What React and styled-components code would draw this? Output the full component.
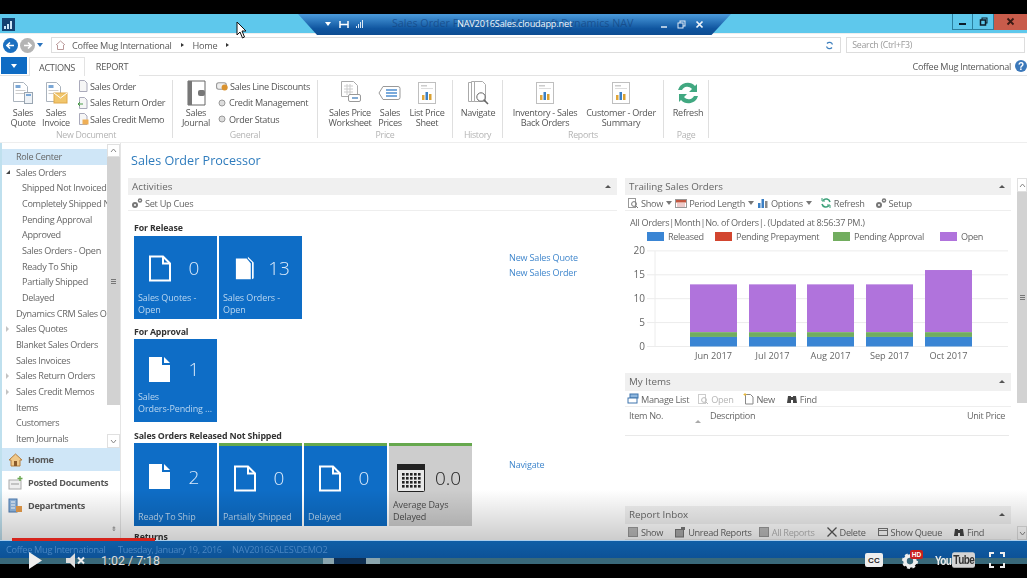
import React from "react";
import styled, { createGlobalStyle } from "styled-components";

const Global = createGlobalStyle`
  html, body { margin: 0; padding: 0; background: #000; overflow: hidden; }
  * { box-sizing: border-box; }
`;

const Stage = styled.div`
  position: relative; width: 1027px; height: 578px; background: #000; overflow: hidden;
  font-family: "Open Sans", "Noto Sans", sans-serif; font-size: 9.2px; color: #555; letter-spacing: -.3px;
  display: flex; flex-direction: column;
`;
const BlackBar = styled.div`height: ${p => p.$h}px; flex: none; background: #000;`;
const Win = styled.div`height: 550px; flex: none; display: flex; flex-direction: column; background: #fff; filter: blur(0.4px);`;

const TitleBar = styled.div`height: 19px; flex: none; background: #5ec8ec; display: flex; justify-content: space-between; align-items: flex-start; padding-left: 2px;`;
const AppLogo = styled.svg`width: 13px; height: 13px; margin-top: 4px;`;
const WinButtons = styled.div`display: flex; height: 16px;`;
const WinBtn = styled.div`
  width: ${p => p.$w}px; display: flex; align-items: center; justify-content: center;
  background: ${p => p.$close ? "#c85c4b" : "#5ec8ec"}; border: 1px solid ${p => p.$close ? "#c85c4b" : "#2b7f9f"}; border-top: 0; border-left-width: ${p => p.$nl ? 0 : 1}px;
`;
const WinGlyph = styled.svg`width: 9px; height: 9px;`;

const AddressRow = styled.div`height: 24px; flex: none; display: flex; align-items: center; padding: 0 2px 1px 3px; border-top: 1px solid #eee;`;
const NavCircle = styled.div`
  width: 15px; height: 15px; border-radius: 50%; background: ${p => p.$bg}; margin-right: 2px; color: #fff;
  display: flex; align-items: center; justify-content: center;
`;
const TinyCaret = styled.span`
  width: 0; height: 0; border-left: 3px solid transparent; border-right: 3px solid transparent; border-top: 4px solid ${p => p.$c || "#2a73bd"};
  margin: ${p => p.$m || "0"};
  display: inline-block; flex: none;
`;
const AddressBox = styled.div`
  width: 792px; height: 16px; margin-left: 8px; border: 1px solid #ddd; display: flex; align-items: center; padding: 0 6px 0 3px;
  font-size: 9.2px; color: #5a5a5a; gap: 3px;
`;
const Crumb = styled.span`margin-left: ${p => p.$ml || 0}px;`;
const CrumbArrow = styled.span`width: 0; height: 0; border-top: 2.5px solid transparent; border-bottom: 2.5px solid transparent; border-left: 3px solid #333; margin: 0 6px;`;
const Push = styled.span`flex: 1;`;
const SearchBox = styled.div`width: 179px; height: 16px; margin-left: 5px; border: 1px solid #ddd; padding-left: 5px; display: flex; align-items: center; color: #9a9a9a; font-size: 8.8px;`;

const TabRow = styled.div`height: 19px; flex: none; display: flex; align-items: stretch; padding-left: 1px; border-bottom: 1px solid #e3e3e3;`;
const FileTab = styled.div`width: 26px; height: 17px; background: #0f6cc4; display: flex; align-items: center; justify-content: center;`;
const Tab = styled.div`
  width: ${p => p.$w}px; margin-left: ${p => p.$ml || 0}px; height: 19px; display: flex; align-items: center; justify-content: center; font-size: 9.2px; color: #555;
  background: #fff; ${p => p.$active ? "border: 1px solid #e3e3e3; border-bottom: 0;" : ""}
`;
const CompanyArea = styled.div`margin-left: auto; display: flex; align-items: center; font-size: 9.1px; color: #555; gap: 4px;`;
const HelpDot = styled.div`width: 12px; height: 12px; border-radius: 50%; background: #3b78ba; color: #fff; font: bold 10px "Liberation Sans", sans-serif; display: flex; align-items: center; justify-content: center;`;

const Ribbon = styled.div`height: 67px; flex: none; display: flex; padding-top: 4px; border-bottom: 1px solid #eee;`;
const Group = styled.div`
  width: ${p => p.$w}px; height: 58px; flex: none; display: flex; flex-direction: column; border-right: 1px solid #dfdfdf; padding-left: ${p => p.$pl || 0}px;
`;
const GroupItems = styled.div`display: flex; flex: 1; min-height: 0;`;
const GroupLabel = styled.div`height: 11px; line-height: 11px; margin-bottom: -3px; text-align: center; margin-left: ${p => -(p.$pl || 0)}px; font-size: 8.8px; color: #b4b4b4;`;
const BigBtn = styled.div`
  width: ${p => p.$w}px; margin-left: ${p => p.$ml || 0}px; flex: none; display: flex; flex-direction: column; align-items: center; text-align: center;
  font-size: 9.1px; line-height: 10px; color: #555;
`;
const BigIcon = styled.svg`width: 26px; height: 26px; margin-bottom: 2px; flex: none;`;
const SmallList = styled.div`margin-left: ${p => p.$ml || 0}px; margin-top: -2px; display: flex; flex-direction: column; gap: .5px;`;
const SmallItem = styled.div`height: 16px; display: flex; align-items: center; gap: 1px; font-size: 9.1px; white-space: nowrap; color: #555;`;
const SmallIcon = styled.svg`width: ${p => p.$s || 12}px; height: ${p => p.$s || 12}px; flex: none;`;

const Body = styled.div`flex: 1; min-height: 0; display: flex; position: relative; overflow: hidden;`;
const Side = styled.div`width: 121px; flex: none; display: flex; flex-direction: column; border-right: 1px solid #e5e5e5; border-left: 2px solid #bfe0ee;`;
const SideTop = styled.div`height: 305px; flex: none; display: flex;`;
const SideTree = styled.div`flex: 1; min-width: 0; padding-top: 6px; overflow: hidden;`;
const TreeRow = styled.div`
  height: 15.67px; line-height: 15.67px; white-space: nowrap; overflow: hidden; font-size: 9.1px; color: #666;
  padding-left: ${p => p.$lvl ? 20 : 14}px; position: relative;
  background: ${p => p.$active ? "#cfe6f7" : "transparent"};
`;
const Twisty = styled.span`
  position: absolute; left: 4px; top: 5px; width: 0; height: 0;
  ${p => p.$open
    ? "border-left: 4px solid transparent; border-bottom: 4px solid #444;"
    : "border-top: 3px solid transparent; border-bottom: 3px solid transparent; border-left: 3px solid #c3c3c3;"}
`;
const VScroll = styled.div`width: ${p => p.$w}px; flex: none; display: flex; flex-direction: column; background: #fff; margin-top: ${p => p.$mt || 0}px; margin-left: ${p => p.$ml || 0}px;`;
const ScrollBtn = styled.div`height: ${p => p.$h}px; flex: none; border: 1px solid #e0e0e0; display: flex; align-items: center; justify-content: center; background: #fff;`;
const Thumb = styled.div`height: ${p => p.$h}px; flex: none; background: #d2d2d2; display: flex; align-items: center; justify-content: center;`;
const TrackRest = styled.div`flex: 1;`;
const Grip = styled.div`width: 5px; height: 5px; border-top: 1px solid #777; border-bottom: 1px solid #777; position: relative;
  &::after { content: ""; position: absolute; left: 0; right: 0; top: 1px; height: 1px; background: #777; }
`;
const Chev = styled.svg`width: 7px; height: 5px;`;

const NavBtn = styled.div`
  height: ${p => p.$h}px; display: flex; align-items: center; gap: 5px; padding-left: 6px; font-size: 9.1px; font-weight: 700; color: #585858;
  background: ${p => p.$active ? "#cfe6f7" : "#fff"};
`;
const NavSpacer = styled.div`flex: 1; display: flex; justify-content: flex-end; align-items: center; padding: 0 3px 0 0; font-size: 7px; color: #999;`;

const Content = styled.div`flex: 1; min-width: 0; display: flex; padding-left: 7px;`;
const LeftCol = styled.div`width: 489px; flex: none; display: flex; flex-direction: column;`;
const RightCol = styled.div`width: 386px; flex: none; margin-left: 8px; padding-top: 35px; display: flex; flex-direction: column;`;
const PageTitle = styled.div`height: 20px; margin: 8px 0 7px 3px; font-size: 12.6px; line-height: 20px; letter-spacing: 0; color: #2f7cbd;`;
const PartHeader = styled.div`
  height: ${p => p.$h || 17}px; flex: none; background: #f0f0f0; display: flex; justify-content: space-between; align-items: center; padding: 0 6px 1px 4px; font-size: 9.8px; letter-spacing: 0; color: #666;
`;
const UpMark = styled.span`width: 0; height: 0; border-left: 3px solid transparent; border-right: 3px solid transparent; border-bottom: 3px solid #555;`;
const PartBar = styled.div`height: 16px; flex: none; display: flex; align-items: center; padding: 1px 0 0 ${p => p.$pl || 3}px; border-bottom: 1px solid #eee; font-size: 9.2px; color: #666; gap: ${p => p.$gap || 9}px;`;
const BarItem = styled.span`display: flex; align-items: center; gap: 2px; color: ${p => p.$off ? "#b5b5b5" : "#666"}; white-space: nowrap; margin-left: ${p => p.$ml || 0}px;`;
const Cues = styled.div`padding-left: 6px; padding-top: 11px;`;
const CueTitle = styled.div`height: 12px; line-height: 12px; margin: ${p => p.$mt || 0}px 0 ${p => p.$mb || 1}px; font-size: 8.8px; font-weight: 700; letter-spacing: -.15px; color: #333;`;
const CueRow = styled.div`display: flex;`;
const Tiles = styled.div`width: 375px; flex: none; display: flex; gap: 2px;`;
const Links = styled.div`padding-top: 14px; display: flex; flex-direction: column;`;
const LinkText = styled.div`height: 15px; line-height: 15px; color: #3f86cc; font-size: 9px; letter-spacing: -.15px;`;
const Tile = styled.div`
  width: 83px; height: 83px; flex: none; display: flex; flex-direction: column; padding: 0 5px ${p => p.$lb || 3}px 4px;
  background: ${p => p.$gray ? "#cdcdcd" : "#0e6dc6"};
  color: ${p => p.$gray ? "#4c4c4c" : "#b9d6f0"};
  border-top: ${p => p.$bar ? "3px solid #66a84e" : "0"};
  letter-spacing: -.1px;
`;
const TileTop = styled.div`display: flex; align-items: center; padding-top: ${p => p.$pt}px; padding-left: ${p => p.$il || 10}px; height: 52px; flex: none;`;
const TileIcon = styled.svg`width: ${p => p.$s || 24}px; height: ${p => p.$s || 27}px; flex: none;`;
const TileCount = styled.div`flex: 1; text-align: center; padding-left: 4px; font-size: 19px; font-weight: 300; letter-spacing: 0; color: ${p => p.$gray ? "#222" : "#dbeafa"};`;
const TileLabel = styled.div`margin-top: auto; font-size: 9px; line-height: 12px; white-space: ${p => p.$nowrap ? "nowrap" : "normal"};`;

const Status = styled.div`font-size: 9.1px; color: #666; height: 15px; line-height: 15px; padding-left: 5px; margin-top: 4px;`;
const Legend = styled.div`height: 15px; display: flex; align-items: center; padding-left: 22px; font-size: 9.1px; color: #666;`;
const Swatch = styled.span`width: 17px; height: 9px; background: ${p => p.$c}; flex: none; margin-right: 4px;`;
const LegendLabel = styled.span`width: ${p => p.$w}px; flex: none; white-space: nowrap;`;
const Chart = styled.svg`width: 386px; height: 122px; flex: none; display: block; letter-spacing: 0; margin-top: 1px; margin-bottom: 7px;`;
const ColRow = styled.div`height: 29px; flex: none; display: flex; padding: 2px 4px 0 4px; border-bottom: 1px solid #e9e9e9; font-size: 9.1px; color: #666; margin-right: 2px;`;
const ColNo = styled.div`width: 81px; position: relative;`;
const SortMark = styled.span`position: absolute; left: 66px; top: 11px; width: 0; height: 0; border-left: 3px solid transparent; border-right: 3px solid transparent; border-bottom: 3px solid #aaa;`;
const ColDesc = styled.div`flex: 1;`;
const EmptyList = styled.div`height: 70px; flex: none;`;

const Shade = styled.div`position: absolute; left: 0; right: 0; top: 347px; height: 50px; background: linear-gradient(rgba(0,0,0,0), rgba(0,0,0,.2)); pointer-events: none;`;

const StatusBar = styled.div`height: 18px; flex: none; background: linear-gradient(#0f5ea6, #0d5297); border-top: 1px solid #a9cdec; display: flex; align-items: center; padding-left: 6px; color: #4a86c3; font-size: 9.2px;`;
const StatusCell = styled.span`width: ${p => p.$w}px; flex: none; white-space: nowrap;`;
const Task = styled.div`height: 6px; flex: none; background: #39697a; display: flex; padding-left: 323px;`;
const TaskItem = styled.div`width: ${p => p.$w}px; height: 6px; background: ${p => p.$c}; flex: none;`;

const Remote = styled.div`
  position: absolute; left: 298px; top: 14px; width: 433px; height: 21px;
  background: linear-gradient(#4b9bdc, #0f559f 70%, #0e4d92);
  clip-path: polygon(0 0, 100% 0, 95.5% 100%, 4.4% 100%);
  display: flex; align-items: center; padding-left: 27px; padding-bottom: 1px; color: #fff;
`;
const RemotePin = styled.svg`width: 22px; height: 9px; margin-left: 2px; flex: none;`;
const RemoteTitle = styled.div`position: relative; flex: 1; height: 20px;`;
const GhostTitle = styled.span`position: absolute; left: 27px; top: 2px; white-space: nowrap; font-size: 10.7px; letter-spacing: 0; color: rgba(20,70,130,.75);`;
const HostTitle = styled.span`position: absolute; left: 92px; top: 3px; white-space: nowrap; font-size: 9.2px; letter-spacing: -.2px; color: #f0f6fb;`;
const RemoteBtns = styled.div`display: flex; padding-right: 23px; align-items: center;`;
const RemoteBtn = styled.svg`width: 17.5px; height: 9px; flex: none;`;
const Cursor = styled.svg`position: absolute; left: 236px; top: 21px; width: 12px; height: 18px;`;

const Progress = styled.div`position: absolute; left: 12px; top: 538px; width: 143px; height: 3px; background: #d5241c;`;
const Player = styled.div`position: absolute; left: 0; right: 0; top: 548px; height: 24px; display: flex; align-items: center; color: #e8e8e8; padding-left: 28px; letter-spacing: 0;`;
const PlayIcon = styled.svg`width: 15px; height: 17px; flex: none;`;
const MuteIcon = styled.svg`width: 20px; height: 15px; flex: none; margin-left: 23px;`;
const TimeText = styled.span`margin-left: 15px; font: 12.4px "Roboto", "Liberation Sans", sans-serif; color: #dcdcdc;`;
const CC = styled.div`margin-left: auto; width: 18px; height: 14px; border-radius: 2px; background: #eee; color: #222; font: bold 8px "Liberation Sans", sans-serif; letter-spacing: .3px; display: flex; align-items: center; justify-content: center;`;
const GearWrap = styled.div`position: relative; width: 18px; height: 18px; margin-left: 19px; flex: none;`;
const Gear = styled.svg`width: 16px; height: 16px; position: absolute; left: 0; top: 2px;`;
const HD = styled.span`position: absolute; left: 8px; top: -1px; width: 13px; height: 9px; border-radius: 2px; background: #c9201c; color: #fff; font: bold 6.5px/9px "Liberation Sans", sans-serif; text-align: center;`;
const YT = styled.div`display: flex; align-items: center; width: 37px; flex: none; margin-left: 15px; font: bold 10px "Liberation Sans", sans-serif; letter-spacing: -.6px; color: #eee; transform: scaleY(1.3);`;
const YTBox = styled.span`background: #d4d4d4; color: #333; border-radius: 2px; padding: 0 1px; margin-left: 1px; height: 12px; line-height: 12px;`;
const Full = styled.svg`width: 16px; height: 16px; margin: 0 22px 0 17px; flex: none;`;

const QuoteIcon = ({ env }) => (
  <BigIcon viewBox="0 0 26 26">
    <path d="M3.500 2.500h10l4 4v15h-14z" fill="#fff" stroke="#aab3bd" />
    <rect x="5.500" y="5" width="5" height="3" fill="#7aa7d6" />
    <rect x="5.500" y="10" width="10" height="1" fill="#ccc" />
    <rect x="5.500" y="13" width="10" height="1" fill="#ccc" />
    {env
      ? <g><rect x="11" y="13" width="13" height="10" fill="#f1c66c" stroke="#e0a94a" /><path d="M11 13l6.500 5 6.500-5" fill="none" stroke="#fff" /></g>
      : <g><rect x="14.500" y="12.500" width="8" height="11" fill="#eef2f6" stroke="#99a5b1" /><rect x="16" y="14" width="5" height="2" fill="#7aa7d6" /></g>}
  </BigIcon>
);
const Chartlet = () => (
  <BigIcon viewBox="0 0 26 26">
    <rect x="4.500" y="2.500" width="17" height="21" fill="#fff" stroke="#bfbfbf" />
    <rect x="7" y="5" width="6" height="1.500" fill="#ccc" />
    <rect x="7" y="8" width="12" height="1" fill="#ddd" />
    <rect x="8" y="15" width="2.500" height="5" fill="#e0a63a" />
    <rect x="11.500" y="12" width="2.500" height="8" fill="#3a7fc4" />
    <rect x="15" y="14" width="2.500" height="6" fill="#d9a030" />
  </BigIcon>
);
const PageSmall = ({ tint }) => (
  <SmallIcon viewBox="0 0 12 12">
    <path d="M2.500.5h5l2.500 2.500v8.500h-7.500z" fill="#f6f6f6" stroke="#aab" />
    {tint === "green" && <path d="M1 7h5M1 7l2-2M1 7l2 2" stroke="#4b9c4b" fill="none" />}
    {tint === "orange" && <rect x="5.500" y="6.500" width="6" height="5" fill="#eeae55" />}
  </SmallIcon>
);
const Radio = () => (
  <SmallIcon viewBox="0 0 12 12"><circle cx="6" cy="6" r="3" fill="#ddd" stroke="#999" /></SmallIcon>
);
const Tag = () => (
  <SmallIcon viewBox="0 0 12 12" $s={13}><rect x=".5" y="2.500" width="9" height="6" rx="2" fill="#eee" stroke="#999" /><circle cx="8" cy="7" r="2.800" fill="#d9922f" /></SmallIcon>
);
const DocBlank = () => (
  <TileIcon viewBox="0 0 24 27"><path d="M2 1.500h13l7 7v17H2z" fill="none" stroke="#fff" strokeWidth="2" /><path d="M15 1.500v7h7" fill="none" stroke="#fff" strokeWidth="2" /></TileIcon>
);
const DocFill = () => (
  <TileIcon viewBox="0 0 24 27"><path d="M1 1h13v8h8v17H1z" fill="#fff" /><path d="M16 1l6 6h-6z" fill="#fff" /></TileIcon>
);
const DocStack = () => (
  <TileIcon viewBox="0 0 24 29" $s={24}><path d="M1 3h13l5 6v19H1z" fill="#fff" /><path d="M15.500 1l7 7v19l-2 1V8l-5-5z" fill="#fff" /></TileIcon>
);
const Calendar = () => (
  <TileIcon viewBox="0 0 28 28" $s={28}>
    <rect x=".5" y=".5" width="27" height="27" rx="1" fill="#e8e8e8" stroke="#222" />
    <rect x="0" y="0" width="28" height="6" fill="#222" />
    {[0, 1, 2, 3].map(r => [0, 1, 2, 3, 4].map(c => (
      <rect key={`${r}${c}`} x={5 + c * 4} y={9 + r * 4} width="2.600" height="2.600" fill="#222" />
    )))}
  </TileIcon>
);
const ManageIcon = () => <SmallIcon viewBox="0 0 12 12"><rect x="3" y="1" width="8" height="4" fill="#8fb7de" stroke="#3e74ad" /><rect x="1" y="5" width="9" height="5" fill="#fff" stroke="#3e74ad" /></SmallIcon>;
const LensIcon = ({ off }) => <SmallIcon viewBox="0 0 12 12"><rect x="1.500" y="1.500" width="7" height="9" fill="#fff" stroke={off ? "#ccc" : "#999"} /><circle cx="7" cy="7" r="2.400" fill="none" stroke={off ? "#bbb" : "#777"} /><path d="M9 9l2 2" stroke={off ? "#bbb" : "#777"} /></SmallIcon>;
const NewIcon = () => <SmallIcon viewBox="0 0 12 12"><path d="M2.500 1.500h5l2.500 2.500v7h-7.500z" fill="#fff" stroke="#888" /><path d="M2 0v3M.5 1.500h3" stroke="#e8b83a" /></SmallIcon>;
const FindIcon = () => <SmallIcon viewBox="0 0 12 12"><path d="M1 10l1-7h3v7zM7 10V3h3l1 7zM5 4h2v3H5z" fill="#444" /></SmallIcon>;
const GearsIcon = () => <SmallIcon viewBox="0 0 12 12"><circle cx="4" cy="8" r="3" fill="#777" /><circle cx="4" cy="8" r="1" fill="#fff" /><circle cx="9" cy="3.500" r="2.200" fill="#777" /><circle cx="9" cy="3.500" r=".8" fill="#fff" /></SmallIcon>;
const CalIcon = () => <SmallIcon viewBox="0 0 12 12"><rect x=".5" y="2.500" width="11" height="8" fill="#fff" stroke="#999" /><rect x="1" y="3" width="10" height="2.500" fill="#c4563f" /><path d="M2 7h8M2 9h8" stroke="#d99" /></SmallIcon>;
const BarsIcon = () => <SmallIcon viewBox="0 0 12 12"><rect x="1" y="6" width="2.500" height="5" fill="#3a7fc4" /><rect x="4.500" y="2" width="2.500" height="9" fill="#3a7fc4" /><rect x="8" y="4" width="2.500" height="7" fill="#8a8a8a" /></SmallIcon>;
const RefreshSm = () => <SmallIcon viewBox="0 0 12 12"><path d="M10 5a4 4 0 0 0-7-1.500M2 7a4 4 0 0 0 7 1.500" fill="none" stroke="#3aa078" strokeWidth="1.600" /><path d="M2 1v3h3M10 11V8H7" fill="none" stroke="#3aa078" /></SmallIcon>;
const GreyBoxIcon = () => <SmallIcon viewBox="0 0 12 12"><rect x="1.500" y="1.500" width="9" height="9" fill="#bbb" stroke="#999" /></SmallIcon>;
const UnreadIcon = () => <SmallIcon viewBox="0 0 12 12"><rect x="1.500" y="3.500" width="8" height="7.500" fill="#aaa" stroke="#777" /><path d="M7 1h4v3H7z" fill="#777" /></SmallIcon>;
const CrossIcon = () => <SmallIcon viewBox="0 0 12 12"><path d="M1.500 1.500l9 9M10.500 1.500l-9 9" stroke="#555" strokeWidth="1.300" /></SmallIcon>;
const QueueIcon = () => <SmallIcon viewBox="0 0 12 12"><rect x="1.500" y="2.500" width="9" height="7" fill="#fff" stroke="#777" /><path d="M1.500 4.500h9" stroke="#777" /></SmallIcon>;

const tree = [
  ["Role Center", 0, null, true], ["Sales Orders", 0, "open"], ["Shipped Not Invoiced", 1], ["Completely Shipped Not Invoiced", 1],
  ["Pending Approval", 1], ["Approved", 1], ["Sales Orders - Open", 1], ["Ready To Ship", 1], ["Partially Shipped", 1], ["Delayed", 1],
  ["Dynamics CRM Sales Orders", 0], ["Sales Quotes", 0, "closed"], ["Blanket Sales Orders", 0], ["Sales Invoices", 0],
  ["Sales Return Orders", 0, "closed"], ["Sales Credit Memos", 0, "closed"], ["Items", 0], ["Customers", 0], ["Item Journals", 0],
];

const bars = [690, 749, 807, 866, 925];
const labels = ["Jun 2017", "Jul 2017", "Aug 2017", "Sep 2017", "Oct 2017"];
const totals = [13, 13, 13, 13, 16];
const u = 4.78, y0 = 346.5;

export default function App() {
  return (
    <Stage>
      <Global />
      <BlackBar $h={14} />
      <Win>
        <TitleBar>
          <AppLogo viewBox="0 0 13 13">
            <rect width="13" height="13" fill="#14406f" />
            <path d="M2 11V8h2v3zM5 11V6h2v5zM8 11V3h2v8z" fill="#cfe6f6" />
          </AppLogo>
          <WinButtons>
            <WinBtn $w={21}><WinGlyph viewBox="0 0 9 9"><rect x="1" y="6" width="7" height="2" fill="#0c1c2a" /></WinGlyph></WinBtn>
            <WinBtn $w={21} $nl><WinGlyph viewBox="0 0 9 9"><rect x="3" y="1" width="5" height="5" fill="none" stroke="#0c1c2a" /><rect x="1.500" y="3" width="5" height="5" fill="#5ec8ec" stroke="#0c1c2a" strokeWidth="1.500" /></WinGlyph></WinBtn>
            <WinBtn $w={33} $close $nl><WinGlyph viewBox="0 0 9 9"><path d="M1.500 1.500l6 6M7.500 1.500l-6 6" stroke="#3a1a14" strokeWidth="1.800" /></WinGlyph></WinBtn>
          </WinButtons>
        </TitleBar>

        <AddressRow>
          <NavCircle $bg="#1b6fc0">
            <svg width="9" height="9" viewBox="0 0 9 9"><path d="M8 4.500H1.500M4 1.500l-3 3 3 3" fill="none" stroke="#fff" strokeWidth="1.600" /></svg>
          </NavCircle>
          <NavCircle $bg="#b4b4b4">
            <svg width="9" height="9" viewBox="0 0 9 9"><path d="M1 4.500h6.500M5 1.500l3 3-3 3" fill="none" stroke="#fff" strokeWidth="1.600" /></svg>
          </NavCircle>
          <TinyCaret />
          <AddressBox>
            <svg width="11" height="10" viewBox="0 0 11 10"><path d="M1 5l4.500-4L10 5M2.500 5v4.500h6V5" fill="none" stroke="#b99" /></svg>
            <Crumb $ml={3}>Coffee Mug International</Crumb><CrumbArrow />
            <Crumb>Home</Crumb><CrumbArrow />
            <Push />
            <svg width="9" height="9" viewBox="0 0 9 9"><path d="M7.500 3.500a3.200 3.200 0 0 0-5.500-1M1.500 5.500a3.200 3.200 0 0 0 5.500 1" fill="none" stroke="#3d7fbd" strokeWidth="1.200" /></svg>
          </AddressBox>
          <SearchBox>Search (Ctrl+F3)</SearchBox>
        </AddressRow>

        <TabRow>
          <FileTab><TinyCaret $c="#fff" /></FileTab>
          <Tab $w={56} $ml={2} $active>ACTIONS</Tab>
          <Tab $w={54}>REPORT</Tab>
          <CompanyArea>Coffee Mug International<HelpDot>?</HelpDot></CompanyArea>
        </TabRow>

        <Ribbon>
          <Group $w={173} $pl={6}>
            <GroupItems>
              <BigBtn $w={34}><QuoteIcon />Sales Quote</BigBtn>
              <BigBtn $w={32}><QuoteIcon env />Sales Invoice</BigBtn>
              <SmallList $ml={5}>
                <SmallItem><PageSmall />Sales Order</SmallItem>
                <SmallItem><PageSmall tint="green" />Sales Return Order</SmallItem>
                <SmallItem><PageSmall tint="orange" />Sales Credit Memo</SmallItem>
              </SmallList>
            </GroupItems>
            <GroupLabel $pl={6}>New Document</GroupLabel>
          </Group>
          <Group $w={145} $pl={5}>
            <GroupItems>
              <BigBtn $w={36}>
                <BigIcon viewBox="0 0 26 26"><path d="M5 1h17v24H5z" fill="#fff" stroke="#666" /><rect x="5" y="1" width="4" height="24" fill="#777" /><rect x="15" y="10" width="7" height="6" rx="2" fill="#777" /></BigIcon>
                Sales Journal
              </BigBtn>
              <SmallList $ml={2}>
                <SmallItem><Tag />Sales Line Discounts</SmallItem>
                <SmallItem><Radio />Credit Management</SmallItem>
                <SmallItem><Radio />Order Status</SmallItem>
              </SmallList>
            </GroupItems>
            <GroupLabel $pl={5}>General</GroupLabel>
          </Group>
          <Group $w={135} $pl={7}>
            <GroupItems>
              <BigBtn $w={50}>
                <BigIcon viewBox="0 0 26 26"><path d="M4.500 1.500h12l4 4v11h-16z" fill="#fff" stroke="#aaa" /><path d="M7 6h9M7 9h9M7 12h9M10 4v11M13 4v11" stroke="#ccc" /><rect x="11.500" y="14.500" width="12" height="7" rx="1.500" fill="#fff" stroke="#999" /><path d="M15 18h6" stroke="#5b8fc4" strokeWidth="1.500" /></BigIcon>
                Sales Price Worksheet
              </BigBtn>
              <BigBtn $w={30}>
                <BigIcon viewBox="0 0 26 26"><path d="M6 6.500h15a2 2 0 0 1 2 2v9a2 2 0 0 1-2 2H6l-4-6.500z" fill="#fff" stroke="#999" /><path d="M9 10h11M9 13h11M9 16h11" stroke="#4f8fd0" strokeWidth="1.300" /></BigIcon>
                Sales Prices
              </BigBtn>
              <BigBtn $w={40} $ml={2}><Chartlet />List Price Sheet</BigBtn>
            </GroupItems>
            <GroupLabel $pl={7}>Price</GroupLabel>
          </Group>
          <Group $w={50} $pl={3}>
            <GroupItems>
              <BigBtn $w={44}>
                <BigIcon viewBox="0 0 26 26"><path d="M3.500 2.500h3v19h-3zM6.500 1.500h3v20h-3zM9.500 1.500h8l3 3v17h-11z" fill="#fff" stroke="#aaa" /><circle cx="16" cy="17" r="4.200" fill="#fff" stroke="#666" /><path d="M19 20l4 4" stroke="#666" strokeWidth="1.600" /></BigIcon>
                Navigate
              </BigBtn>
            </GroupItems>
            <GroupLabel $pl={3}>History</GroupLabel>
          </Group>
          <Group $w={161} $pl={5}>
            <GroupItems>
              <BigBtn $w={74}><Chartlet />Inventory - Sales Back Orders</BigBtn>
              <BigBtn $w={74} $ml={2}><Chartlet />Customer - Order Summary</BigBtn>
            </GroupItems>
            <GroupLabel $pl={5}>Reports</GroupLabel>
          </Group>
          <Group $w={45} $pl={2}>
            <GroupItems>
              <BigBtn $w={44}>
                <BigIcon viewBox="0 0 26 26"><path d="M3 10a10 10 0 0 1 17-4l2-2v8h-8l3-3a6 6 0 0 0-10 1z" fill="#41a881" /><path d="M23 16a10 10 0 0 1-17 4l-2 2v-8h8l-3 3a6 6 0 0 0 10-1z" fill="#41a881" /></BigIcon>
                Refresh
              </BigBtn>
            </GroupItems>
            <GroupLabel $pl={2}>Page</GroupLabel>
          </Group>
        </Ribbon>

        <Body>
          <Side>
            <SideTop>
              <SideTree>
                {tree.map(([t, lvl, tw, act]) => (
                  <TreeRow key={t} $lvl={lvl} $active={act}>
                    {tw && <Twisty $open={tw === "open"} />}{t}
                  </TreeRow>
                ))}
              </SideTree>
              <VScroll $w={13} $mt={1}>
                <ScrollBtn $h={13}><Chev viewBox="0 0 7 5"><path d="M1 4l2.500-3L6 4" fill="none" stroke="#888" /></Chev></ScrollBtn>
                <Thumb $h={248}><Grip /></Thumb>
                <TrackRest />
                <ScrollBtn $h={14}><Chev viewBox="0 0 7 5"><path d="M1 1l2.500 3L6 1" fill="none" stroke="#888" /></Chev></ScrollBtn>
              </VScroll>
            </SideTop>
            <NavBtn $h={23} $active>
              <svg width="15" height="14" viewBox="0 0 15 14"><path d="M7.500 1L1 7h2v6h9V7h2z" fill="#f0c98a" stroke="#b57e3f" /><rect x="6" y="8" width="3" height="5" fill="#8a5a2a" /></svg>Home
            </NavBtn>
            <NavBtn $h={23}>
              <svg width="15" height="14" viewBox="0 0 15 14"><rect x="1" y="4" width="12" height="9" fill="#eee" stroke="#aaa" /><path d="M12 0v5M9.500 2.500h5" stroke="#6aa84f" strokeWidth="1.400" /><path d="M3 8h8" stroke="#999" /></svg>Posted Documents
            </NavBtn>
            <NavBtn $h={23}>
              <svg width="15" height="15" viewBox="0 0 15 15"><rect x="1" y="1" width="8" height="13" fill="#8fb4dc" stroke="#4b78ad" /><rect x="8" y="8" width="6" height="6" fill="#e39a4a" /><path d="M3 4h4M3 7h4M3 10h4" stroke="#fff" /></svg>Departments
            </NavBtn>
            <NavSpacer>⇟</NavSpacer>
          </Side>

          <Content>
            <LeftCol>
              <PageTitle>Sales Order Processor</PageTitle>
              <PartHeader>Activities<UpMark /></PartHeader>
              <PartBar>
                <BarItem><GearsIcon />Set Up Cues</BarItem>
              </PartBar>
              <Cues>
                <CueTitle $mb={2}>For Release</CueTitle>
                <CueRow>
                  <Tiles>
                    <Tile>
                      <TileTop $pt={12}><DocBlank /><TileCount>0</TileCount></TileTop>
                      <TileLabel>Sales Quotes - Open</TileLabel>
                    </Tile>
                    <Tile>
                      <TileTop $pt={12}><DocStack /><TileCount>13</TileCount></TileTop>
                      <TileLabel>Sales Orders - Open</TileLabel>
                    </Tile>
                  </Tiles>
                  <Links><LinkText>New Sales Quote</LinkText><LinkText>New Sales Order</LinkText></Links>
                </CueRow>
                <CueTitle $mt={7}>For Approval</CueTitle>
                <CueRow>
                  <Tiles>
                    <Tile $lb={14}>
                      <TileTop $pt={8}><DocFill /><TileCount>1</TileCount></TileTop>
                      <TileLabel $nowrap>Sales<br />Orders-Pending ...</TileLabel>
                    </Tile>
                  </Tiles>
                </CueRow>
                <CueTitle $mt={8}>Sales Orders Released Not Shipped</CueTitle>
                <CueRow>
                  <Tiles>
                    <Tile>
                      <TileTop $pt={15}><DocFill /><TileCount>2</TileCount></TileTop>
                      <TileLabel>Ready To Ship</TileLabel>
                    </Tile>
                    <Tile $bar>
                      <TileTop $pt={12}><DocBlank /><TileCount>0</TileCount></TileTop>
                      <TileLabel>Partially Shipped</TileLabel>
                    </Tile>
                    <Tile $bar>
                      <TileTop $pt={12}><DocBlank /><TileCount>0</TileCount></TileTop>
                      <TileLabel>Delayed</TileLabel>
                    </Tile>
                    <Tile $bar $gray>
                      <TileTop $pt={12} $il={4}><Calendar /><TileCount $gray>0.0</TileCount></TileTop>
                      <TileLabel>Average Days Delayed</TileLabel>
                    </Tile>
                  </Tiles>
                  <Links><LinkText>Navigate</LinkText></Links>
                </CueRow>
                <CueTitle $mt={5}>Returns</CueTitle>
              </Cues>
            </LeftCol>

            <RightCol>
              <PartHeader>Trailing Sales Orders<UpMark /></PartHeader>
              <PartBar $gap={3} $pl={2}>
                <BarItem><LensIcon />Show <TinyCaret $c="#777" $m="0 0 0 1px" /></BarItem>
                <BarItem><CalIcon />Period Length <TinyCaret $c="#777" $m="0 0 0 1px" /></BarItem>
                <BarItem><BarsIcon />Options <TinyCaret $c="#777" $m="0 0 0 1px" /></BarItem>
                <BarItem $ml={5}><RefreshSm />Refresh</BarItem>
                <BarItem $ml={7}><GearsIcon />Setup</BarItem>
              </PartBar>
              <Status>All Orders|Month|No. of Orders|. (Updated at  8:56:37 PM.)</Status>
              <Legend>
                <Swatch $c="#3a85d4" /><LegendLabel $w={47}>Released</LegendLabel>
                <Swatch $c="#d2452f" /><LegendLabel $w={97}>Pending Prepayment</LegendLabel>
                <Swatch $c="#72ad5f" /><LegendLabel $w={86}>Pending Approval</LegendLabel>
                <Swatch $c="#b073dc" /><LegendLabel $w={30}>Open</LegendLabel>
              </Legend>
              <Chart viewBox="625 244 386 122">
                {[0, 5, 10, 15, 20].map(v => (
                  <g key={v}>
                    <line x1="647" x2="1008" y1={y0 - v * u} y2={y0 - v * u} stroke="#ececec" />
                    <text x="645" y={y0 - v * u + 3.5} textAnchor="end" fontSize="10" fill="#666" fontFamily="Open Sans, sans-serif">{v}</text>
                  </g>
                ))}
                <line x1="655" x2="655" y1="251" y2="347" stroke="#ececec" />
                {bars.map((x, i) => (
                  <g key={x}>
                    <rect x={x} y={y0 - totals[i] * u} width="47" height={(totals[i] - 3) * u} fill="#b073dc" />
                    <rect x={x} y={y0 - 3 * u} width="47" height={u} fill="#72ad5f" />
                    <rect x={x} y={y0 - 2 * u} width="47" height={2 * u} fill="#3a85d4" />
                    <text x={x + 23.5} y="359" textAnchor="middle" fontSize="9.2" fill="#666" fontFamily="Open Sans, sans-serif">{labels[i]}</text>
                  </g>
                ))}
              </Chart>
              <PartHeader $h={18}>My Items<UpMark /></PartHeader>
              <PartBar $gap={8} $pl={2}>
                <BarItem><ManageIcon />Manage List</BarItem>
                <BarItem $off><LensIcon off />Open</BarItem>
                <BarItem $ml={1}><NewIcon />New</BarItem>
                <BarItem $ml={3}><FindIcon />Find</BarItem>
              </PartBar>
              <ColRow>
                <ColNo>Item No.<SortMark /></ColNo>
                <ColDesc>Description</ColDesc>
                <span>Unit Price</span>
              </ColRow>
              <EmptyList />
              <PartHeader $h={18}>Report Inbox<UpMark /></PartHeader>
              <PartBar $gap={11} $pl={2}>
                <BarItem><GreyBoxIcon />Show</BarItem>
                <BarItem><UnreadIcon />Unread Reports</BarItem>
                <BarItem $off $ml={-5}><GreyBoxIcon />All Reports</BarItem>
                <BarItem><CrossIcon />Delete</BarItem>
                <BarItem><QueueIcon />Show Queue</BarItem>
                <BarItem><FindIcon />Find</BarItem>
              </PartBar>
            </RightCol>

            <VScroll $w={10} $mt={35} $ml={6}>
              <ScrollBtn $h={14}><Chev viewBox="0 0 7 5"><path d="M1 4l2.500-3L6 4" fill="none" stroke="#888" /></Chev></ScrollBtn>
              <Thumb $h={211}><Grip /></Thumb>
              <TrackRest />
              <ScrollBtn $h={14}><Chev viewBox="0 0 7 5"><path d="M1 1l2.500 3L6 1" fill="none" stroke="#888" /></Chev></ScrollBtn>
            </VScroll>
          </Content>
          <Shade />
        </Body>

        <StatusBar>
          <StatusCell $w={112}>Coffee Mug International</StatusCell>
          <StatusCell $w={114}>Tuesday, January 19, 2016</StatusCell>
          <StatusCell $w={110}>NAV2016SALES\DEMO2</StatusCell>
        </StatusBar>
        <Task>
          <TaskItem $w={11} $c="#8aa5ae" />
          <TaskItem $w={32} $c="#0f2f52" />
          <TaskItem $w={14} $c="#8aa5ae" />
        </Task>
      </Win>
      <BlackBar $h={14} />

      <Remote>
        <TinyCaret $c="#fff" />
        <RemotePin viewBox="0 0 22 9"><path d="M7 4.500h8M7 1v7M15 1v7" stroke="#fff" strokeWidth="1.500" fill="none" /></RemotePin>
        <svg width="10" height="10" viewBox="0 0 10 10"><path d="M1 9V7h1v2zM3 9V5h1v4zM5 9V3h1v6zM7 9V1h1v8z" fill="#dfeaf5" /></svg>
        <RemoteTitle>
          <GhostTitle>Sales Order Processor - Microsoft Dynamics NAV</GhostTitle>
          <HostTitle>NAV2016Sales.cloudapp.net</HostTitle>
        </RemoteTitle>
        <RemoteBtns>
          <RemoteBtn viewBox="0 0 17.500 9"><path d="M5 7h6" stroke="#dfeaf5" strokeWidth="1.600" /></RemoteBtn>
          <RemoteBtn viewBox="0 0 17.500 9"><rect x="7" y="1" width="5" height="5" fill="none" stroke="#dfeaf5" /><rect x="5" y="3" width="5" height="5" fill="#0f559f" stroke="#dfeaf5" /></RemoteBtn>
          <RemoteBtn viewBox="0 0 17.500 9"><path d="M5.500 1.500l6 6M11.500 1.500l-6 6" stroke="#eef4fa" strokeWidth="1.700" /></RemoteBtn>
        </RemoteBtns>
      </Remote>
      <Cursor viewBox="0 0 12 18"><path d="M1 1v13l3-3 2.500 6 2-1L6 10h4z" fill="#fff" stroke="#111" /></Cursor>

      <Progress />
      <Player>
        <PlayIcon viewBox="0 0 15 17"><path d="M1 0l13 8.500L1 17z" fill="#eee" /></PlayIcon>
        <MuteIcon viewBox="0 0 20 15"><path d="M0 5h4l5-5v15l-5-5H0z" fill="#ddd" /><path d="M12 4.500l6 6M18 4.500l-6 6" stroke="#eee" strokeWidth="2" /></MuteIcon>
        <TimeText>1:02 / 7:18</TimeText>
        <CC>CC</CC>
        <GearWrap>
          <Gear viewBox="0 0 16 16"><circle cx="8" cy="8" r="5" fill="none" stroke="#eee" strokeWidth="3.600" /><circle cx="8" cy="8" r="7" fill="none" stroke="#eee" strokeWidth="2" strokeDasharray="3 2.500" /></Gear>
          <HD>HD</HD>
        </GearWrap>
        <YT>You<YTBox>Tube</YTBox></YT>
        <Full viewBox="0 0 16 16"><path d="M1 5V1h4M11 1h4v4M15 11v4h-4M5 15H1v-4" fill="none" stroke="#eee" strokeWidth="2" /></Full>
      </Player>
    </Stage>
  );
}
